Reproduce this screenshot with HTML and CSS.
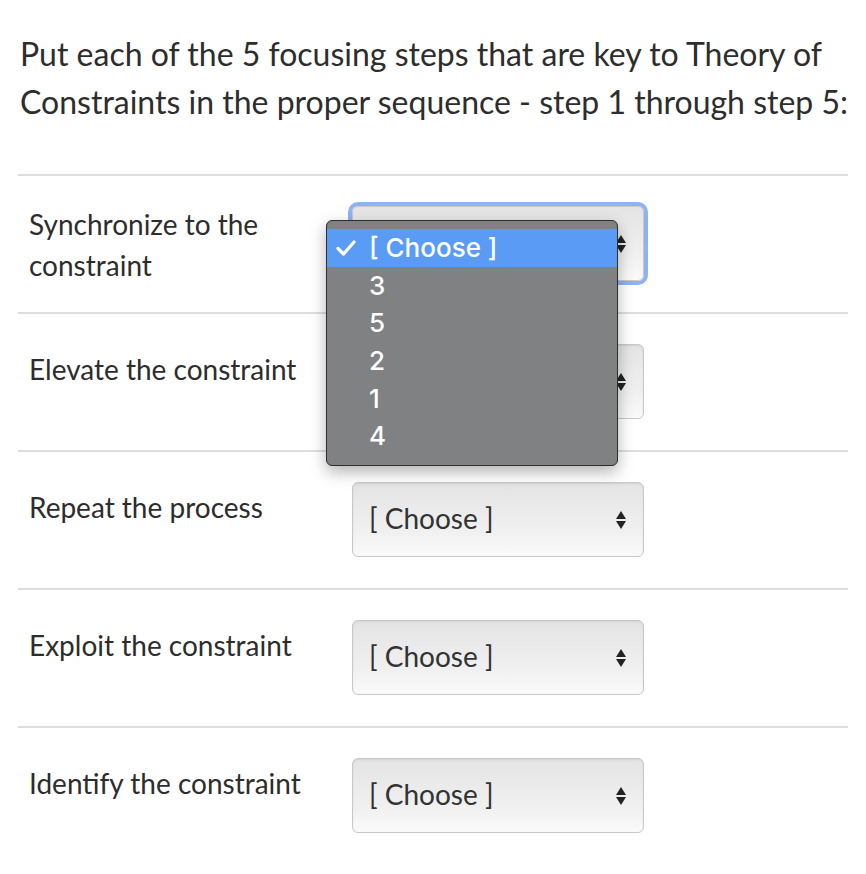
FILE: index.html
```html
<!DOCTYPE html>
<html>
<head>
<meta charset="utf-8">
<link rel="stylesheet" href="styles.css">
</head>
<body>
<div class="page">
  <p class="question">Put each of the 5 focusing steps that are key to Theory of Constraints in the proper sequence - step 1 through step 5:</p>
  <div class="rows">
    <div class="row">
      <div class="label label-two">Synchronize to the constraint</div>
      <div class="select-wrap">
        <div class="select focused"><span class="value"></span><span class="arrows"><i class="up"></i><i class="down"></i></span></div>
        <ul class="menu">
          <li class="active"><svg class="check" width="20" height="16" viewBox="0 0 20 16"><path d="M2 8.5 L7.5 14 L18 2" fill="none" stroke="#fff" stroke-width="3.2" stroke-linecap="round" stroke-linejoin="round"/></svg>[ Choose ]</li>
          <li>3</li>
          <li>5</li>
          <li>2</li>
          <li>1</li>
          <li>4</li>
        </ul>
      </div>
    </div>
    <div class="row">
      <div class="label">Elevate the constraint</div>
      <div class="select-wrap">
        <div class="select"><span class="value">[ Choose ]</span><span class="arrows"><i class="up"></i><i class="down"></i></span></div>
      </div>
    </div>
    <div class="row">
      <div class="label">Repeat the process</div>
      <div class="select-wrap">
        <div class="select"><span class="value">[ Choose ]</span><span class="arrows"><i class="up"></i><i class="down"></i></span></div>
      </div>
    </div>
    <div class="row">
      <div class="label">Exploit the constraint</div>
      <div class="select-wrap">
        <div class="select"><span class="value">[ Choose ]</span><span class="arrows"><i class="up"></i><i class="down"></i></span></div>
      </div>
    </div>
    <div class="row">
      <div class="label">Identify the constraint</div>
      <div class="select-wrap">
        <div class="select"><span class="value">[ Choose ]</span><span class="arrows"><i class="up"></i><i class="down"></i></span></div>
      </div>
    </div>
  </div>
</div>
</body>
</html>
```
FILE: styles.css
```css
html, body {
  margin: 0;
  padding: 0;
  background: #fff;
}
body {
  font-family: Lato, "Noto Sans", sans-serif;
  color: #2d2d2d;
}
.page {
  width: 830px;
  padding: 30px 0 0 18px;
}
.question {
  margin: 0 0 0 2px;
  font-size: 32px;
  line-height: 48px;
  padding-bottom: 48px;
}
.row {
  display: flex;
  height: 136px;
  border-top: 2px solid #ddd;
  padding-left: 11px;
  align-items: flex-start;
}
.label {
  flex: 0 0 323px;
  width: 323px;
  box-sizing: border-box;
  padding-right: 20px;
  font-size: 28px;
  line-height: 41px;
  padding-top: 35px;
}
.label-two {
  padding-top: 28px;
}
.select-wrap {
  position: relative;
  padding-top: 30px;
}
.select {
  box-sizing: border-box;
  width: 292px;
  height: 75px;
  border: 1px solid #c8c8c8;
  border-radius: 6px;
  background: linear-gradient(#e4e4e4, #f0f0f0 65%, #fafafa);
  box-shadow: inset 0 1px 2px rgba(0,0,0,0.08);
  display: flex;
  align-items: center;
  padding: 0 17px 0 16px;
  font-size: 28px;
  color: #333;
}
.select.focused {
  box-shadow: 0 0 0 4px #8db3f3;
}
.value {
  flex: 1;
  padding-bottom: 3px;
}
.arrows {
  display: flex;
  flex-direction: column;
  align-items: center;
  gap: 2px;
}
.arrows i {
  display: block;
  width: 0;
  height: 0;
  border-left: 5px solid transparent;
  border-right: 5px solid transparent;
}
.arrows .up {
  border-bottom: 8px solid #222;
}
.arrows .down {
  border-top: 8px solid #222;
}
.menu {
  position: absolute;
  z-index: 10;
  left: -26px;
  top: 44px;
  width: 292px;
  margin: 0;
  padding: 8px 0 10px;
  list-style: none;
  box-sizing: border-box;
  background: #808183;
  border: 1px solid #2e2e2e;
  border-radius: 6px;
  box-shadow: 0 6px 16px rgba(0,0,0,0.3);
  font-family: Inter, "Liberation Sans", Arial, sans-serif;
  font-weight: 500;
  font-size: 26px;
  color: #fff;
}
.menu li {
  height: 37.7px;
  line-height: 37.7px;
  padding-left: 42px;
  position: relative;
}
.menu li.active {
  background: #5a9bf6;
}
.check {
  position: absolute;
  left: 9px;
  top: 11px;
}
```
